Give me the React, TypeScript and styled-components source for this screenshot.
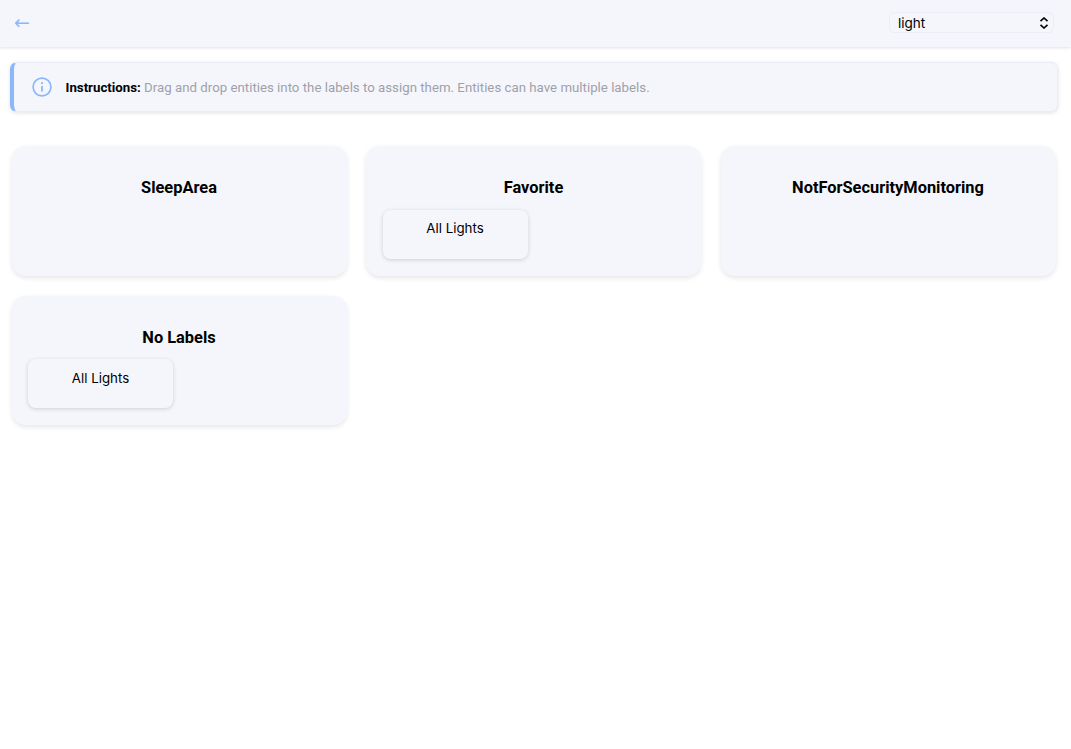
import styled, { createGlobalStyle } from "styled-components";

const GlobalStyle = createGlobalStyle`
    html, body {
        margin: 0;
        padding: 0;
        background: #ffffff;
    }

    * {
        box-sizing: border-box;
    }
`;

const labels = [
    { name: "SleepArea", entities: [] as string[] },
    { name: "Favorite", entities: ["All Lights"] },
    { name: "NotForSecurityMonitoring", entities: [] as string[] },
    { name: "No Labels", entities: ["All Lights"] },
];

function App() {
    return (
        <Page>
            <GlobalStyle />
            <Header>
                <BackButton aria-label="back">←</BackButton>
                <SelectWrap>
                    <DomainSelect defaultValue="light">
                        <option value="light">light</option>
                    </DomainSelect>
                    <SelectArrows width="10" height="12" viewBox="0 0 10 12" fill="none">
                        <path d="M1.5 4.2 5 1l3.5 3.2M1.5 7.8 5 11l3.5-3.2" stroke="#000000" strokeWidth="1.6" />
                    </SelectArrows>
                </SelectWrap>
            </Header>

            <Alert>
                <InfoIcon width="20" height="20" viewBox="0 0 20 20" fill="none">
                    <circle cx="10" cy="10" r="8.9" stroke="#8ab8fb" strokeWidth="1.7" />
                    <circle cx="10" cy="6.2" r="1.1" fill="#8ab8fb" />
                    <path d="M10 9v5.4" stroke="#8ab8fb" strokeWidth="1.8" />
                </InfoIcon>
                <AlertText>
                    <strong>Instructions:</strong> Drag and drop entities into the labels to assign
                    them. Entities can have multiple labels.
                </AlertText>
            </Alert>

            <LabelGrid>
                {labels.map((label) => (
                    <LabelCard key={label.name}>
                        <LabelTitle>{label.name}</LabelTitle>
                        {label.entities.map((entity) => (
                            <EntityChip key={entity}>{entity}</EntityChip>
                        ))}
                    </LabelCard>
                ))}
            </LabelGrid>
        </Page>
    );
}

export default App;

// --- Styled Components ---

const Page = styled.div`
    min-height: 749px;
    background: #ffffff;
    color: #000000;
    font-family: "Inter", "Liberation Sans", sans-serif;
`;

const Header = styled.header`
    display: flex;
    align-items: center;
    justify-content: space-between;
    height: 47px;
    padding: 0 17px 2px 12px;
    background: #f5f6fc;
    box-shadow: 0 1px 3px rgba(0, 0, 0, 0.12);
`;

const BackButton = styled.button`
    width: 20px;
    padding: 0;
    border: none;
    background: transparent;
    color: #8ab8fb;
    font-family: "DejaVu Sans", sans-serif;
    font-size: 19px;
    line-height: 1;
`;

const SelectWrap = styled.div`
    position: relative;
    display: flex;
`;

const DomainSelect = styled.select`
    appearance: none;
    width: 165px;
    height: 21px;
    padding: 0 4px 0 8px;
    border: 1px solid #eceef5;
    border-radius: 5px;
    background-color: #f5f6fc;
    color: #000000;
    font-family: "Inter", sans-serif;
    font-size: 13.5px;
`;

const SelectArrows = styled.svg`
    position: absolute;
    top: 5px;
    right: 5.5px;
    pointer-events: none;
`;

const Alert = styled.div`
    display: flex;
    align-items: center;
    gap: 13.5px;
    width: 1048px;
    height: 50px;
    margin: 15px 0 0 10px;
    padding-left: 18px;
    background: #f5f6fc;
    border: 1px solid #e9edf7;
    border-left: 4px solid #8ab8fb;
    border-radius: 7px;
    box-shadow: 0 1px 4px rgba(0, 0, 0, 0.12);
`;

const InfoIcon = styled.svg`
    flex: none;
`;

const AlertText = styled.p`
    margin: 0;
    color: #9fa1a9;
    font-family: "Roboto", sans-serif;
    font-size: 13.27px;

    strong {
        color: #000000;
        font-weight: 700;
    }
`;

const LabelGrid = styled.div`
    display: grid;
    grid-template-columns: repeat(3, 335px);
    column-gap: 19.5px;
    row-gap: 20px;
    margin: 34px 0 0 11.5px;
`;

const LabelCard = styled.section`
    height: 129.5px;
    padding: 31.4px 16.5px 0;
    background: #f5f6fc;
    border-radius: 14px;
    box-shadow: 0 2px 5px rgba(0, 0, 0, 0.1);
`;

const LabelTitle = styled.h3`
    margin: 0 0 10.3px;
    height: 22px;
    font-family: "Roboto", sans-serif;
    font-size: 16.4px;
    font-weight: 700;
    line-height: 22px;
    text-align: center;
`;

const EntityChip = styled.div`
    width: 145px;
    height: 49px;
    padding-top: 10.4px;
    background: #f5f6fc;
    border-radius: 8px;
    box-shadow: 0 1px 4px rgba(0, 0, 0, 0.16);
    font-size: 13.3px;
    line-height: 17px;
    text-align: center;
`;
